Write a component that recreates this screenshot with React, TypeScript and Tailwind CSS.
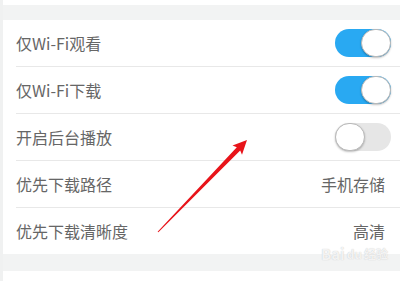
import React from 'react';

function Toggle({ on }: { on: boolean }) {
  return (
    <div
      className={`relative w-[56px] h-[28px] rounded-full ${on ? 'bg-[#29a9f2]' : 'bg-[#e6e6e6]'}`}
    >
      <div
        className={`absolute top-0 w-[30px] h-[28px] rounded-full bg-white border border-[#b9b9b9] shadow-[0_1px_2px_rgba(0,0,0,0.25)] ${on ? 'right-0' : 'left-0'}`}
      />
    </div>
  );
}

function Row({ label, right, last }: { label: string; right: React.ReactNode; last?: boolean }) {
  return (
    <div className="pl-[13px]">
      <div
        className={`flex items-center justify-between pr-[9px] ${last ? 'h-[46px]' : 'h-[47px] border-b border-[#e8e8e8]'}`}
      >
        <span className="text-[16px] text-[#666] leading-none">{label}</span>
        {right}
      </div>
    </div>
  );
}

export default function App() {
  return (
    <div
      className="relative w-[400px] h-[281px] overflow-hidden bg-white border-l-[3px] border-[#f0f1f1]"
      style={{ fontFamily: '"Noto Sans CJK SC", "Noto Sans", sans-serif' }}
    >
      <div className="h-[5px] bg-white" />
      <div className="h-[15px] bg-[#f2f3f3]" />

      <Row label="仅Wi-Fi观看" right={<Toggle on />} />
      <Row label="仅Wi-Fi下载" right={<Toggle on />} />
      <Row label="开启后台播放" right={<Toggle on={false} />} />
      <Row label="优先下载路径" right={<span className="text-[16px] text-[#666] leading-none mr-[6px]">手机存储</span>} />
      <Row label="优先下载清晰度" right={<span className="text-[16px] text-[#666] leading-none mr-[6px]">高清</span>} last />

      <div className="h-[17px] bg-[#f2f3f3]" />

      {/* watermark */}
      <div className="absolute left-[318px] top-[246px] flex items-center gap-[2px] text-[15px] font-bold leading-none text-white/80 [text-shadow:0_0_1px_#bbb] pointer-events-none">
        <span>Bai</span>
        <span className="text-[12px]">du</span>
        <span className="text-[12px]">经验</span>
      </div>

      {/* red arrow */}
      <svg className="absolute left-[-3px] top-0 pointer-events-none" width="400" height="281" viewBox="0 0 400 281">
        <polygon
          points="157.6,231.7 236.8,147.2 232.5,145.5 247,140 242,154.8 240.2,150.6 158.4,232.3"
          fill="#e8141a"
        />
      </svg>
    </div>
  );
}
